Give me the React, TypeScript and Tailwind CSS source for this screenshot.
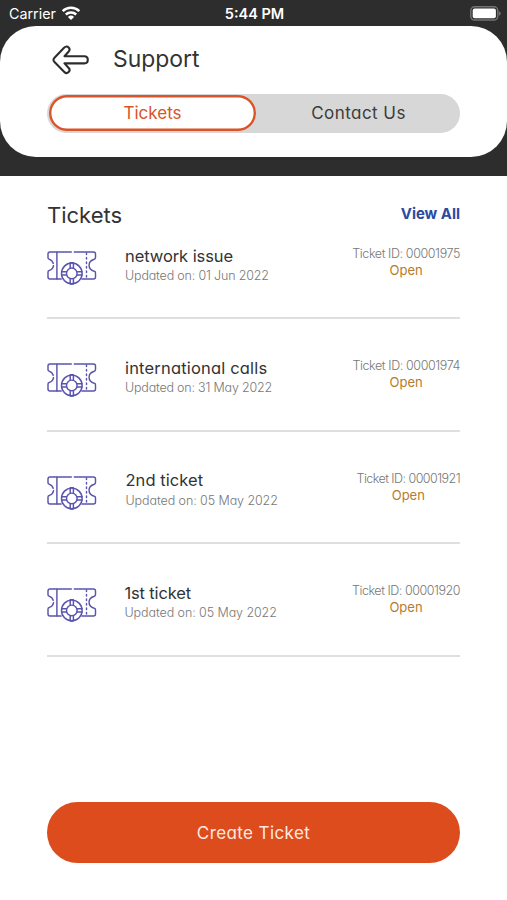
const tickets = [
  { title: 'network issue', date: '01 Jun 2022', id: '00001975', titleClass: 'tracking-[-0.08px]', dateClass: 'tracking-[-0.17px]', idClass: 'tracking-[-0.4px]', indent: 'pl-[28px]' },
  { title: 'international calls', date: '31 May 2022', id: '00001974', titleClass: 'tracking-[0.18px]', dateClass: 'tracking-[-0.2px]', idClass: 'tracking-[-0.4px]', indent: 'pl-[28px]' },
  { title: '2nd ticket', date: '05 May 2022', id: '00001921', titleClass: 'tracking-[0.06px]', dateClass: 'tracking-[-0.08px]', idClass: 'tracking-[-0.55px]', indent: 'pl-[28.5px]' },
  { title: '1st ticket', date: '05 May 2022', id: '00001920', titleClass: 'tracking-[-0.15px]', dateClass: 'tracking-[-0.08px]', idClass: 'tracking-[-0.46px]', indent: 'pl-[27.5px]' },
];

function WifiIcon() {
  return (
    <svg className="ml-[5px] h-[15px] w-[20px]" viewBox="0 0 20 15" fill="none" stroke="#fff" strokeWidth="2.5">
      <path d="M1.7 5.2a12 12 0 0 1 16.6 0" />
      <path d="M4.8 8.5a7.6 7.6 0 0 1 10.4 0" />
      <path d="M10 14.1 6.9 11a4.5 4.5 0 0 1 6.2 0Z" fill="#fff" stroke="none" />
    </svg>
  );
}

function BatteryIcon() {
  return (
    <svg className="h-[15px] w-[32px]" viewBox="0 0 32 15">
      <rect x="0.8" y="0.8" width="27" height="13.2" rx="3.8" fill="none" stroke="#737373" strokeWidth="1.4" />
      <rect x="2.7" y="2.6" width="23.2" height="9.6" rx="2" fill="#fff" />
      <path d="M28.8 5.2c2.6.9 2.6 3.6 0 4.5Z" fill="#737373" />
    </svg>
  );
}

function BackIcon() {
  return (
    <svg className="h-[30px] w-[38px]" viewBox="0 0 38 30" fill="none" stroke="#2d2d2d" strokeWidth="2.1" strokeLinejoin="round">
      <path d="M12.3 2.6 2.5 12.7c-1.4 1.4-1.4 2.9 0 4.3l9.8 9.9c1.4 1.4 3.2 1.3 4.3.2 1.2-1.2 1.2-2.9.1-4.1l-4.2-4.6h19.8c2.2 0 3.5-1.6 3.5-3.6s-1.4-3.6-3.5-3.6H12.5l4.2-4.7c1.1-1.3 1-3-.1-4.1-1.2-1.2-3-1.2-4.3.2Z" />
    </svg>
  );
}

function TicketIcon() {
  return (
    <svg className="h-[36px] w-[50px] shrink-0" viewBox="0 0 50 36" fill="none" stroke="#5954ad" strokeWidth="1.45" strokeLinecap="round" strokeLinejoin="round">
      <path d="M24.3 1.9H3c-1.3 0-2 .7-2 2v3.7c0 .8.3 1.3 1 1.5 2.4.8 3.7 2.2 4.2 4.2" />
      <path d="M6.5 15.6c-.4 2.4-1.9 4.1-4.3 4.9-.8.2-1.2.8-1.2 1.6V27c0 1.3.7 2 2 2h11.2" />
      <path d="M27.3 1.9H46.5c1.3 0 2 .7 2 2v3.6c0 .9-.4 1.4-1.2 1.7-7 2.2-7 9.9 0 12.1.8.2 1.2.8 1.2 1.7v4c0 1.3-.7 2-2 2H34.9" />
      <path d="M9.9 2.1V29" />
      <path d="M39.5 2.9V29" strokeDasharray="1.7 2.8" />
      <circle cx="24.8" cy="23.4" r="10.3" />
      <circle cx="24.8" cy="23.4" r="5.3" />
      <path d="M23.2 13V18M26.4 13V18M23.2 28.8v5.3M26.4 28.8v5.3M14.6 21.8h4.8M14.6 25h4.8M30.2 21.8h4.8M30.2 25h4.8M23.2 12.7h3.2M23.2 34.1h3.2" />
    </svg>
  );
}

export default function App() {
  return (
    <main className="flex h-[900px] w-[507px] flex-col overflow-hidden bg-white font-['Inter','Liberation_Sans',sans-serif] text-[#333] [font-feature-settings:'cv11'_1]">
      <header className="h-[175.5px] bg-[#2d2d2d]">
        <div className="grid h-[25.5px] grid-cols-3 items-center pt-[2px] pr-[7px] pl-[9px] text-white [font-feature-settings:normal]">
          <div className="flex items-center text-[14.3px]">
            <span>Carrier</span>
            <WifiIcon />
          </div>
          <div className="text-center text-[14.5px] font-semibold">5:44 PM</div>
          <div className="flex translate-x-[2px] justify-end"><BatteryIcon /></div>
        </div>
        <section className="h-[131.5px] rounded-[36px] bg-white px-[47px] pt-[18.5px]">
          <div className="flex h-[31px] items-center pl-[5px]">
            <BackIcon />
            <h1 className="ml-[23px] text-[22.9px] leading-[31px]">Support</h1>
          </div>
          <div className="mt-[19px] flex h-[39px] rounded-full bg-[#d7d7d7] px-[2px] pt-[1px] pb-[2px]">
            <button className="h-[36px] w-[207px] rounded-full bg-white pt-[1px] text-[17px] text-[#d95428] shadow-[inset_0_0_0_2.4px_#d95428]">Tickets</button>
            <button className="flex-1 pt-[1px] pl-[3px] text-[17px] tracking-[0.45px] text-[#3b3b3b]">Contact Us</button>
          </div>
        </section>
      </header>
      <section className="px-[47px] pt-[24px]">
        <div className="flex h-[32px] items-center justify-between">
          <h2 className="text-[22px]">Tickets</h2>
          <a className="pb-[2px] text-[14.9px] font-bold text-[#2b4ba1]">View All</a>
        </div>
        <ul>
          {tickets.map((ticket) => (
            <li key={ticket.id} className="flex h-[112.5px] items-start border-b-2 border-[#dfdfdf] first:h-[87.9px] [&:not(:first-child)]:pt-[24.6px]">
              <div className="pt-[18.5px]"><TicketIcon /></div>
              <div className={`flex flex-1 flex-col pt-[13px] ${ticket.indent}`}>
                <h3 className={`text-[16.5px] leading-[22px] ${ticket.titleClass}`}>{ticket.title}</h3>
                <p className={`mt-[0.5px] text-[12.5px] leading-[18px] font-light text-[#777] ${ticket.dateClass}`}>Updated on: {ticket.date}</p>
              </div>
              <div className="flex flex-col items-center pt-[13.5px]">
                <p className={`text-[12.5px] leading-[17px] font-light text-[#777] ${ticket.idClass}`}>Ticket ID: {ticket.id}</p>
                <p className="text-[13px] leading-[17px] text-[#b67b2d]">Open</p>
              </div>
            </li>
          ))}
        </ul>
      </section>
      <button className="mx-[47px] mt-auto mb-[37px] h-[61px] shrink-0 rounded-full bg-[#dd4c1c] pt-[2px] text-[17px] tracking-[0.4px] text-[#ffe9e0]">Create Ticket</button>
    </main>
  );
}
